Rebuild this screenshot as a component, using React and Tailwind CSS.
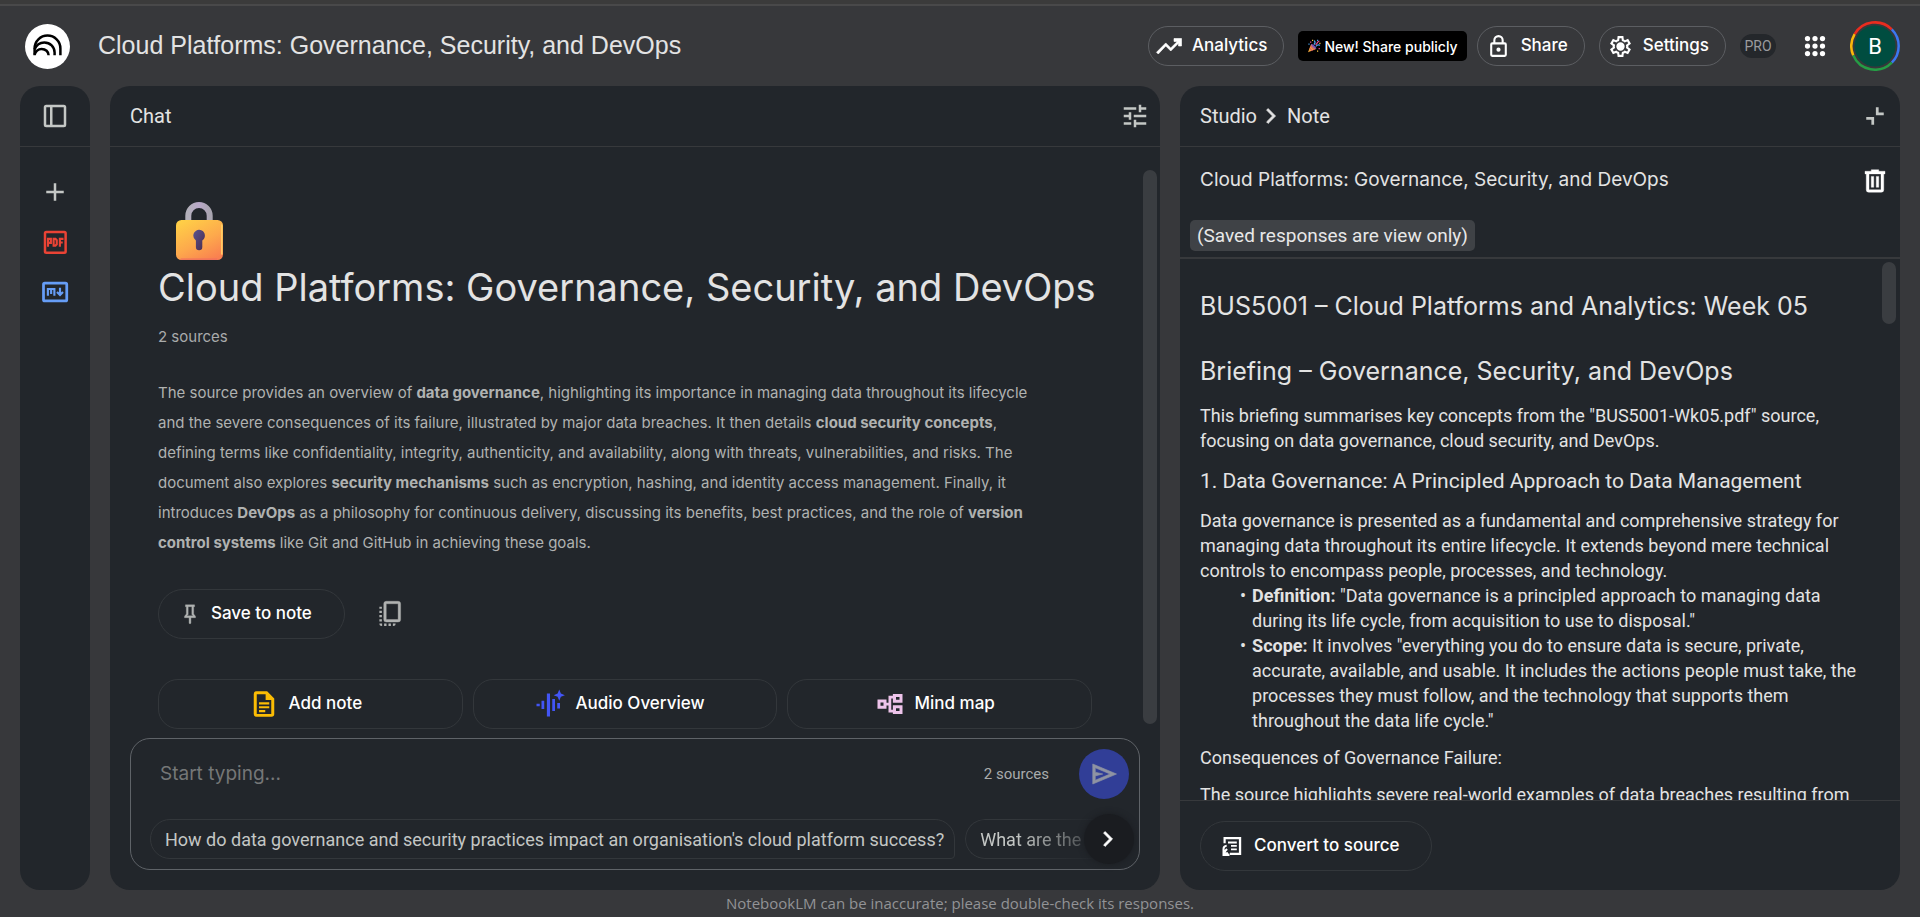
import React from "react";

const Svg = ({ size = 30, children, className = "" }) => (
  <svg width={size} height={size} viewBox="0 0 24 24" fill="currentColor" aria-hidden="true" className={`shrink-0 ${className}`}>
    {children}
  </svg>
);

const Logo = () => (
  <svg width="45" height="45" viewBox="0 0 45 45" aria-hidden="true" className="shrink-0">
    <circle cx="22.5" cy="22.5" r="22.5" fill="#fff" />
    <g fill="none" stroke="#000" strokeWidth="2.5">
      <path d="M9.6 31.3V24.4a12.9 12.9 0 0 1 25.8 0V31.3" />
      <path d="M9.6 25.2c1.7-4.3 5.4-6.8 9.7-6.8 5.8 0 10.3 4.4 10.3 10V31.3" />
      <path d="M9.6 30.7c1.1-3.6 3.7-5.8 7-5.8 4 0 7 2.9 7 6.4" />
    </g>
  </svg>
);

const TrendIcon = () => (
  <Svg>
    <path d="M3.4 18.4 2 17l7.4-7.45 4 4L18.6 8.4H16V6h6v6h-2.4V9.800l-6.200 6.200-4-4z" stroke="currentColor" strokeWidth="0.5" />
  </Svg>
);
const ShareLockIcon = () => (
  <Svg size={25}>
    <path d="M18 8h-1V6A5 5 0 0 0 7 6v2H6a2 2 0 0 0-2 2v10a2 2 0 0 0 2 2h12a2 2 0 0 0 2-2V10a2 2 0 0 0-2-2zM9 6a3 3 0 0 1 6 0v2H9zm9 14H6V10h12zm-6-3a2 2 0 1 0 0-4 2 2 0 0 0 0 4z" />
  </Svg>
);
const GearIcon = () => (
  <Svg size={25}>
    <path fillRule="evenodd" d="M9.250 22l-.4-3.200a3.800 3.800 0 0 1-.61-.3 9 9 0 0 1-.56-.38L4.700 19.370l-2.750-4.750 2.580-1.950a2.300 2.300 0 0 1-.03-.34v-.67c0-.1.010-.21.030-.33L1.950 9.380 4.700 4.630l2.980 1.250c.18-.14.370-.26.570-.38.200-.11.400-.21.600-.3l.4-3.200h5.500l.4 3.200c.22.090.420.190.610.3.190.120.380.240.560.380l2.980-1.250 2.750 4.750-2.580 1.950c.020.120.030.230.030.330v.670c0 .110-.020.220-.050.340l2.570 1.950-2.750 4.750-2.950-1.250c-.18.140-.37.260-.57.380-.2.110-.4.210-.6.3l-.4 3.200zM11 20h1.980l.35-2.650a5.600 5.600 0 0 0 2.600-1.500l2.470 1.020.980-1.700-2.150-1.620a5.300 5.300 0 0 0 0-3.100l2.150-1.620-.980-1.700-2.480 1.050a5.600 5.600 0 0 0-2.600-1.530L13 4h-1.980l-.35 2.650a5.600 5.600 0 0 0-2.600 1.500L5.600 7.130l-.980 1.700 2.150 1.600a5.400 5.400 0 0 0 0 3.120L4.620 15.170l.980 1.700 2.470-1.040a5.600 5.600 0 0 0 2.600 1.520zM12 16a4 4 0 1 0 0-8 4 4 0 0 0 0 8z" />
  </Svg>
);
const PartyIcon = () => (
  <svg width="14" height="14" viewBox="0 0 14 14" aria-hidden="true" className="shrink-0">
    <path d="M1 13.300 4.200 5l5 5z" fill="#f2a73b" />
    <path d="M2.700 9l2.600 3M3.600 6.800l3.800 4.200" stroke="#d9506b" strokeWidth="1.100" />
    <path d="M4.200 5c1.600-.6 5.600 3.200 5 5-1.600.3-5.400-3.300-5-5z" fill="#7a4fb5" />
    <path d="M6.800 5.500c1.600-1 1.400-2.600.6-4M8.800 7.500c1.200-1.600 2.800-1.800 4.300-1.200" stroke="#4aa3f0" strokeWidth="1.200" fill="none" />
    <path d="M8.500 5.800c1.800-1 1.500-3 3.800-3.600" stroke="#e0488b" strokeWidth="1.200" fill="none" />
    <path d="M3 2.500h1.300v1.300H3zM11.600 9h1.300v1.300h-1.300z" fill="#e0488b" />
    <path d="M1.400 4.500h1.200v1.200H1.400zM10 .8h1.200V2H10z" fill="#4aa3f0" />
    <path d="M12.300 3.800h1.200V5h-1.200zM5 .8h1.200V2H5zM10 11.500h1.200v1.200H10z" fill="#f6c344" />
  </svg>
);
const AppsIcon = () => (
  <Svg>
    {[6, 12, 18].map((y) => [6, 12, 18].map((x) => <circle key={`${x}-${y}`} cx={x} cy={y} r="2.1" />))}
  </Svg>
);
const Avatar = () => (
  <svg width="50" height="50" viewBox="0 0 50 50" aria-hidden="true">
    <g fill="none" strokeWidth="2.500">
      <path d="M4.600 13.200A23.700 23.700 0 0 1 41.800 8.300" stroke="#ea2c1f" />
      <path d="M41.800 8.300A23.700 23.700 0 0 1 41.800 41.700" stroke="#3b78f0" />
      <path d="M41.800 41.700A23.700 23.700 0 0 1 3.200 34.300" stroke="#259d45" />
      <path d="M3.200 34.300A23.700 23.700 0 0 1 4.600 13.200" stroke="#fbb70a" />
    </g>
    <circle cx="25" cy="25" r="20.500" fill="#004d40" />
  </svg>
);
const PanelIcon = () => (
  <Svg>
    <path fillRule="evenodd" d="M5 3h14a2 2 0 0 1 2 2v14a2 2 0 0 1-2 2H5a2 2 0 0 1-2-2V5a2 2 0 0 1 2-2zm0 2v14h3V5zm5 0v14h9V5z" />
  </Svg>
);
const PlusIcon = () => (
  <Svg>
    <path d="M11 19v-6H5v-2h6V5h2v6h6v2h-6v6z" />
  </Svg>
);
const PdfIcon = () => (
  <Svg>
    <rect x="4" y="4" width="16.500" height="16.500" rx="1" fill="none" stroke="currentColor" strokeWidth="2" />
    <g fill="none" stroke="currentColor" strokeWidth="1.700">
      <path d="M6.400 15.800V9.500h2.300v3.200H6.400M10.900 14.900V9.500h1.500l1 1v3.400l-1 1zM15.900 15.800V9.500h2.900M15.900 12.400h2.300" />
    </g>
  </Svg>
);
const MdIcon = () => (
  <Svg>
    <rect x="2.800" y="4.900" width="18.600" height="14.200" rx="1" fill="none" stroke="currentColor" strokeWidth="2.200" />
    <g fill="none" stroke="currentColor" strokeWidth="1.700">
      <path d="M6.300 15V9.600h5.200V15M8.900 9.600v4M16 8.600v5.600M13.600 12l2.400 2.400 2.400-2.400" />
    </g>
  </Svg>
);
const TuneIcon = () => (
  <Svg>
    <path d="M3 17v2h6v-2zM3 5v2h10V5zm10 16v-2h8v-2h-8v-2h-2v6zM7 9v2H3v2h4v2h2V9zm14 4v-2H11v2zm-6-4h2V7h4V5h-4V3h-2z" />
  </Svg>
);
const Chevron = ({ size = 24 }) => (
  <Svg size={size}>
    <path d="M8.100 19.400 6.600 17.900l5.900-5.900-5.900-5.900 1.500-1.500L15.500 12z" stroke="currentColor" strokeWidth="0.800" />
  </Svg>
);
const CollapseIcon = () => (
  <Svg>
    <path d="M11.300 12.700V19h-2.200v-4.100H5v-2.200zM14.900 5v4.100H19v2.200h-6.300V5z" />
  </Svg>
);
const TrashIcon = () => (
  <Svg>
    <path fillRule="evenodd" d="M9 3h6v1.200h5V6.300h-1V19a2 2 0 0 1-2 2H7a2 2 0 0 1-2-2V6.300H4V4.200h5zM7.200 6.300V19h9.600V6.300zM9 8.300h2v8.700H9zm4 0h2v8.700h-2z" stroke="currentColor" strokeWidth="0.3" />
  </Svg>
);
const PinIcon = () => (
  <Svg size={22}>
    <path d="M16 4v8l2 2.500V16h-5v6l-1 1-1-1v-6H6v-1.500L8 12V4H7V2h10v2zM8.600 14h6.800L14 12.500V4h-4v8.500z" stroke="currentColor" strokeWidth="0.4" />
  </Svg>
);
const CopyIcon = () => (
  <Svg>
    <path fillRule="evenodd" d="M9 1.800h9.500a2 2 0 0 1 2 2v12.600a2 2 0 0 1-2 2H9a2 2 0 0 1-2-2V3.800a2 2 0 0 1 2-2zm0 2v12.600h9.500V3.800z" stroke="currentColor" strokeWidth="0.3" />
    <path d="M3.500 6.200h2v1.600h-2zm0 3.200h2v1.800h-2zm0 3.400h2v1.800h-2zm0 3.400h2v1.800h-2zm0 3.400h2.200v2H5.500a2 2 0 0 1-2-2zm3.800 0H9.200v2H7.300zm3.500 0h1.900v2h-1.900zm3.500 0h2.200a2 2 0 0 1-2 2h-.2z" />
  </Svg>
);
const NoteIcon = () => (
  <Svg className="text-[#fbbc04]">
    <path fillRule="evenodd" d="M6 1.800h8.500L20.200 7.500V20a2.200 2.200 0 0 1-2.200 2.200H6A2.200 2.200 0 0 1 3.800 20V4A2.200 2.200 0 0 1 6 1.800zm.2 2.300v15.800h11.600V8.800h-4.500V4.100z" />
    <path d="M8 10.600h8.200v1.700H8zm0 3.100h8.200v1.700H8zm0 3.100h5v1.700H8z" />
  </Svg>
);
const AudioIcon = () => (
  <Svg className="text-[#4255f5]">
    <path d="M1.200 11.700h2.600v2H1.200zM5.200 9.300h2.200v6.700H5.200zM9.500 3.500H12v18.400H9.500zM13.800 8H16v9.500h-2.200zM17.800 11.200H20v4.400h-2.200z" />
    <path d="M19.400.4l1.300 3.200 3.200 1.300-3.200 1.300-1.300 3.200-1.300-3.200-3.200-1.300 3.200-1.300z" />
  </Svg>
);
const MindIcon = () => (
  <Svg className="text-[#edc3ea]">
    <path fillRule="evenodd" d="M2 8.300h7.200V10.900h1.600V5.300h3.500V4h7.700v7h-7.700V7.500H13v9h1.300V13h7.700v7h-7.700v-1.300H10.800V13.100H9.200v2.600H2zM4.400 10.700v2.600h2.400v-2.600zM16.800 6.400v2.200h2.800V6.400zm0 9v2.200h2.800v-2.200z" />
  </Svg>
);
const SendIcon = () => (
  <Svg>
    <path d="M3 20V4l19 8zm2-3 11.850-5L5 7v3.500l6 1.500-6 1.500z" stroke="currentColor" strokeWidth="0.500" />
  </Svg>
);
const ConvertIcon = () => (
  <Svg size={24}>
    <path d="M3.500 3h17.700v18H10v-2.200h8.900V5.200H5.700V9.200H3.500z" />
    <path d="M8 7.500h8.800v1.900H8zm3 3.400h5.800v1.900H11zm0 3.500h5.800v1.900H11z" />
    <path d="M2.500 17.500V15c0-2.500 1.400-4 4.200-4.300v2c-1.400.2-2.100 1-2.100 2.300v1l1.700-1.700L7.800 15.800 5.500 18.200h2.500v2.200H2.500z M2.500 19.500h7V22h-7z" />
  </Svg>
);
const LockEmoji = () => (
  <svg width="47" height="58" viewBox="0 0 47 58" role="img" aria-label="Lock" className="ml-[18px] shrink-0">
    <defs>
      <linearGradient id="body" x1="0.2" y1="0" x2="0.8" y2="1">
        <stop offset="0" stopColor="#ffce47" />
        <stop offset="0.550" stopColor="#fda94c" />
        <stop offset="1" stopColor="#f97f50" />
      </linearGradient>
      <linearGradient id="key" x1="0" y1="0" x2="1" y2="1">
        <stop offset="0" stopColor="#5b548f" />
        <stop offset="1" stopColor="#4a2b4e" />
      </linearGradient>
      <linearGradient id="shackle" x1="0" y1="0" x2="1" y2="0">
        <stop offset="0" stopColor="#b3b0ba" />
        <stop offset="0.500" stopColor="#b9a8c9" />
        <stop offset="1" stopColor="#a9a5b0" />
      </linearGradient>
    </defs>
    <path d="M12.300 20V13.800a10.700 10.700 0 0 1 21.400 0V20" fill="none" stroke="url(#shackle)" strokeWidth="6" />
    <rect x="0" y="18" width="47" height="40" rx="5.500" fill="url(#body)" />
    <path d="M45.800 23v29" stroke="#ffd266" strokeWidth="1.400" strokeLinecap="round" />
    <path d="M5 57.200h36" stroke="#ef6f5c" strokeWidth="1.200" strokeLinecap="round" />
    <path d="M17.300 33.700a5.800 5.800 0 1 1 9 4.800V45a3.200 3.200 0 0 1-6.400 0v-6.500a5.800 5.800 0 0 1-2.600-4.800z" fill="url(#key)" />
  </svg>
);

const Panel = ({ children, label }) => (
  <section aria-label={label} className="flex min-h-0 min-w-0 flex-col overflow-hidden rounded-[20px] bg-[#22262b]">
    {children}
  </section>
);

const panelHead = "flex h-[61px] shrink-0 items-center border-b border-[#37393c] text-[20px] text-[#e3e3e3]";
const pill = "flex h-10 items-center rounded-full border border-[#5c5e62] font-['Inter',sans-serif] text-[17px] font-medium text-white";
const action = "flex h-[50px] flex-1 items-center justify-center gap-2.5 rounded-[20px] border border-[#33373b] pr-2.5 font-['Inter',sans-serif] text-[17px] font-medium text-white";
const chip = "flex h-10 shrink-0 items-center whitespace-nowrap rounded-[20px] rounded-br-[4px] border border-[#33373b] pl-3.5 pr-2.5 text-[18px] text-[#c4c7c5]";

function Header() {
  return (
    <header className="flex h-20 shrink-0 items-center pl-[25px] pr-5">
      <Logo />
      <h1 className="ml-7 flex-1 whitespace-nowrap font-['Liberation_Sans',sans-serif] text-[25px] text-[#e3e3e3]">
        Cloud Platforms: Governance, Security, and DevOps
      </h1>
      <button className={`${pill} gap-2 pl-[5px] pr-4`}><TrendIcon />Analytics</button>
      <p className="ml-3.5 flex h-[30px] items-center gap-[3px] whitespace-nowrap rounded-[5px] bg-black px-[9px] font-['Inter',sans-serif] text-[14px] font-medium text-white">
        <PartyIcon />New! Share publicly
      </p>
      <button className={`${pill} ml-2.5 gap-2.5 pl-2 pr-4`}><ShareLockIcon />Share</button>
      <button className={`${pill} ml-3.5 gap-2.5 pl-2 pr-4`}><GearIcon />Settings</button>
      <span className="ml-3.5 flex h-6 w-9 items-center justify-center rounded-xl bg-[#24272b] text-[14px] text-[#9a9b9e]">PRO</span>
      <button aria-label="Google apps" className="ml-6 text-white"><AppsIcon /></button>
      <button aria-label="Account" className="relative ml-5 shrink-0">
        <Avatar />
        <span className="absolute inset-0 flex items-center justify-center text-[22px] text-white">B</span>
      </button>
    </header>
  );
}

function Rail() {
  return (
    <Panel label="Sources">
      <div className={`${panelHead} justify-center`}>
        <button aria-label="Show sources" className="text-[#c4c7c5]"><PanelIcon /></button>
      </div>
      <div className="flex flex-col items-center gap-5 pt-[30px]">
        <button aria-label="Add source" className="text-[#c4c7c5]"><PlusIcon /></button>
        <button aria-label="PDF source" className="text-[#ea4335]"><PdfIcon /></button>
        <button aria-label="Markdown source" className="text-[#669df6]"><MdIcon /></button>
      </div>
    </Panel>
  );
}

function Chat() {
  return (
    <Panel label="Chat">
      <div className={`${panelHead} justify-between pl-5 pr-2.5`}>
        <h2>Chat</h2>
        <button aria-label="Configure chat" className="text-[#c4c7c5]"><TuneIcon /></button>
      </div>
      <div className="flex min-h-0 flex-1 overflow-hidden">
        <div className="min-w-0 flex-1 pl-12 pr-[51px] pt-[55px] font-['Inter',sans-serif]">
          <LockEmoji />
          <h2 className="mt-0.5 whitespace-nowrap text-[38px] leading-[50px] text-[#e3e3e3]">
            Cloud Platforms: Governance, Security, and DevOps
          </h2>
          <p className="mt-[13px] text-[15px] leading-6 text-[#a9abab]">2 sources</p>
          <p className="mt-[29px] max-w-[890px] text-[15px] leading-[30px] text-[#b0b2b1]">
            The source provides an overview of <b>data governance</b>, highlighting its importance in managing data
            throughout its lifecycle and the severe consequences of its failure, illustrated by major data breaches. It
            then details <b>cloud security concepts</b>, defining terms like confidentiality, integrity, authenticity,
            and availability, along with threats, vulnerabilities, and risks. The document also explores{" "}
            <b>security mechanisms</b> such as encryption, hashing, and identity access management. Finally, it
            introduces <b>DevOps</b> as a philosophy for continuous delivery, discussing its benefits, best practices,
            and the role of <b>version control systems</b> like Git and GitHub in achieving these goals.
          </p>
          <div className="mt-[31px] flex items-center gap-[30px]">
            <button className="flex h-[50px] items-center gap-2.5 rounded-full border border-[#33373b] pl-5 pr-8 text-[17px] font-medium text-white">
              <span className="text-[#b0b2b1]"><PinIcon /></span>Save to note
            </button>
            <button aria-label="Copy" className="text-[#b0b2b1]"><CopyIcon /></button>
          </div>
          <div className="mt-10 flex gap-2.5">
            <button className={action}><NoteIcon />Add note</button>
            <button className={action}><AudioIcon />Audio Overview</button>
            <button className={action}><MindIcon />Mind map</button>
          </div>
        </div>
        <div className="mb-[5px] mr-[3px] mt-[23px] w-3.5 shrink-0 rounded-full bg-[#3a3d41]" />
      </div>
      <form className="mx-5 mb-5 mt-[9px] shrink-0 rounded-[20px] border border-[#5f6368] pb-2.5" onSubmit={(e) => e.preventDefault()}>
        <div className="flex items-center pl-[29px] pr-2.5 pt-2.5">
          <input aria-label="Query box" placeholder="Start typing..." className="min-w-0 flex-1 bg-transparent font-['Inter',sans-serif] text-[19px] outline-none text-[#e3e3e3] placeholder:text-[#757777]" />
          <span className="mr-[30px] text-[15px] text-[#a9abab]">2 sources</span>
          <button aria-label="Submit" className="flex size-[50px] items-center justify-center rounded-full bg-[#313e97] text-[#8f93a3]"><SendIcon /></button>
        </div>
        <div className="relative mt-5 overflow-x-clip pl-[19px]">
          <div className="flex gap-2.5 overflow-hidden">
            <button type="button" className={chip}>
              How do data governance and security practices impact an organisation's cloud platform success?
            </button>
            <button type="button" className={`${chip} mask-r-from-35% mask-r-to-100% w-36 overflow-hidden border-r-0`}>What are the</button>
          </div>
          <button type="button" aria-label="Next suggestions" className="absolute -top-[5px] right-[5px] flex size-[50px] items-center justify-center rounded-full bg-[#1a1c20] text-white shadow-[0_0_6px_#1a1c20]">
            <Chevron size={24} />
          </button>
        </div>
      </form>
    </Panel>
  );
}

function Studio() {
  return (
    <Panel label="Studio">
      <div className={`${panelHead} pl-5 pr-2.5`}>
        <a href="#studio">Studio</a>
        <span className="mx-[3px]"><Chevron size={24} /></span>
        <span className="flex-1">Note</span>
        <button aria-label="Collapse" className="text-[#c4c7c5]"><CollapseIcon /></button>
      </div>
      <div className="shrink-0 border-b-2 border-[#37393c] pb-1.5 pl-2.5 pr-2.5">
        <div className="flex h-[67px] items-center justify-between pl-2.5">
          <h3 className="font-['Inter',sans-serif] text-[19px] text-[#e3e3e3]">Cloud Platforms: Governance, Security, and DevOps</h3>
          <button aria-label="Delete note" className="text-white"><TrashIcon /></button>
        </div>
        <p className="mt-1.5 w-fit rounded-[5px] bg-[#3f4246] px-[7px] text-[19px] leading-[31px] text-[#e8e8e8]">(Saved responses are view only)</p>
      </div>
      <div className="flex min-h-0 flex-1 overflow-hidden">
        <article className="min-w-0 flex-1 overflow-hidden pl-5 pr-5 text-[18px] leading-[25px] text-[#e3e3e3]">
          <h2 className="mt-[29px] font-['Inter',sans-serif] text-[25px] leading-9">BUS5001 – Cloud Platforms and Analytics: Week 05</h2>
          <h2 className="mt-[29px] font-['Inter',sans-serif] text-[25px] leading-9">Briefing – Governance, Security, and DevOps</h2>
          <p className="mt-3.5">
            This briefing summarises key concepts from the "BUS5001-Wk05.pdf" source, focusing on data governance, cloud
            security, and DevOps.
          </p>
          <h3 className="mt-[13px] text-[21px] leading-[30px]">1. Data Governance: A Principled Approach to Data Management</h3>
          <p className="mt-3">
            Data governance is presented as a fundamental and comprehensive strategy for managing data throughout its
            entire lifecycle. It extends beyond mere technical controls to encompass people, processes, and technology.
          </p>
          <ul className="pl-10">
            <li className="flex gap-1.5">
              <span>•</span>
              <span><b>Definition:</b> "Data governance is a principled approach to managing data during its life cycle, from acquisition to use to disposal."</span>
            </li>
            <li className="flex gap-1.5">
              <span>•</span>
              <span><b>Scope:</b> It involves "everything you do to ensure data is secure, private, accurate, available, and usable. It includes the actions people must take, the processes they must follow, and the technology that supports them throughout the data life cycle."</span>
            </li>
          </ul>
          <p className="mt-3">Consequences of Governance Failure:</p>
          <p className="mt-3">The source highlights severe real-world examples of data breaches resulting from</p>
        </article>
        <div className="mr-1 mt-[3px] h-[62px] w-3.5 shrink-0 rounded-full bg-[#3a3d41]" />
      </div>
      <div className="shrink-0 border-t border-[#37393c] px-5 pb-[19px] pt-5">
        <button className="flex h-[50px] items-center gap-2.5 rounded-[25px] border border-[#33373b] pl-[19px] pr-8 font-['Inter',sans-serif] text-[17px] font-medium text-white">
          <ConvertIcon />Convert to source
        </button>
      </div>
    </Panel>
  );
}

export default function App() {
  return (
    <div className="flex h-screen flex-col overflow-hidden bg-[#37383b] font-['Roboto','Noto_Sans',sans-serif]">
      <div className="h-1.5 shrink-0 border-b-2 border-[#49494a] bg-[#3b3b3b]" />
      <Header />
      <main className="grid min-h-0 flex-1 grid-cols-[70px_minmax(0,1050fr)_minmax(0,720fr)] grid-rows-[minmax(0,1fr)] gap-5 px-5">
        <Rail />
        <Chat />
        <Studio />
      </main>
      <footer className="h-[27px] shrink-0 text-center font-['Open_Sans',sans-serif] text-[15px] font-medium leading-[27px] text-[#929396]">
        NotebookLM can be inaccurate; please double-check its responses.
      </footer>
    </div>
  );
}
